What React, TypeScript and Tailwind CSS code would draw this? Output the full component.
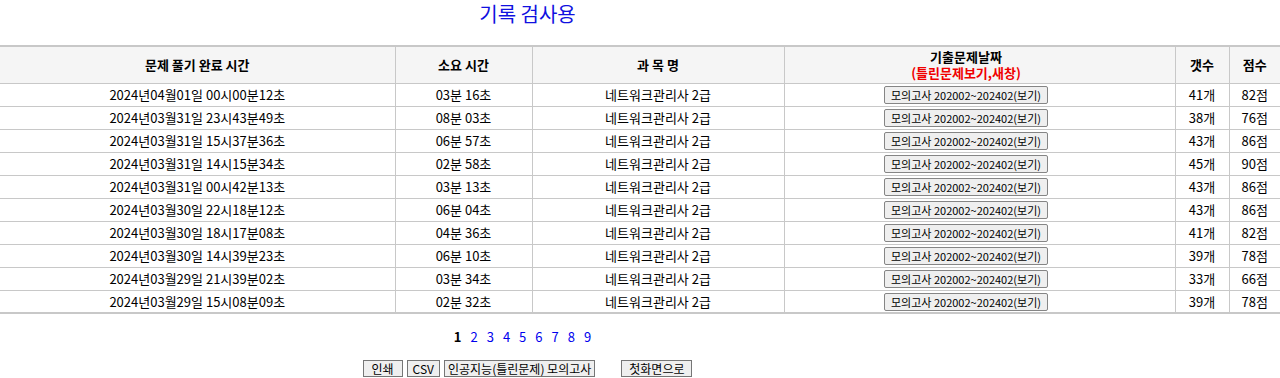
const rows = [
  { done: '2024년04월01일 00시00분12초', took: '03분 16초', cnt: '41개', score: '82점' },
  { done: '2024년03월31일 23시43분49초', took: '08분 03초', cnt: '38개', score: '76점' },
  { done: '2024년03월31일 15시37분36초', took: '06분 57초', cnt: '43개', score: '86점' },
  { done: '2024년03월31일 14시15분34초', took: '02분 58초', cnt: '45개', score: '90점' },
  { done: '2024년03월31일 00시42분13초', took: '03분 13초', cnt: '43개', score: '86점' },
  { done: '2024년03월30일 22시18분12초', took: '06분 04초', cnt: '43개', score: '86점' },
  { done: '2024년03월30일 18시17분08초', took: '04분 36초', cnt: '41개', score: '82점' },
  { done: '2024년03월30일 14시39분23초', took: '06분 10초', cnt: '39개', score: '78점' },
  { done: '2024년03월29일 21시39분02초', took: '03분 34초', cnt: '33개', score: '66점' },
  { done: '2024년03월29일 15시08분09초', took: '02분 32초', cnt: '39개', score: '78점' },
];

const font = { fontFamily: '"Malgun Gothic", "Noto Sans CJK KR", "Noto Sans", sans-serif' };

function Btn({ children }: { children: React.ReactNode }) {
  return (
    <button className="h-[18px] px-[6px] text-[11px] leading-[16px] text-black bg-[#efefef] border border-[#858585] rounded-[2px]">
      {children}
    </button>
  );
}

export default function App() {
  return (
    <div className="w-[1280px] h-[378px] bg-white text-black overflow-hidden" style={font}>
      <div className="w-[1055px] pt-[1px] h-[45px] text-center">
        <h1 className="text-[20px] leading-[26px] text-[#1010e0]">기록 검사용</h1>
      </div>

      <table className="w-full table-fixed border-collapse text-[13px]">
        <colgroup>
          <col className="w-[395px]" />
          <col className="w-[137px]" />
          <col className="w-[252px]" />
          <col className="w-[391px]" />
          <col className="w-[54px]" />
          <col />
        </colgroup>
        <thead>
          <tr className="bg-[#f5f5f5] border-t-2 border-b border-[#c8c8c8] h-[37px]">
            <th className="font-bold border-r border-[#c8c8c8] leading-[16px]">문제 풀기 완료 시간</th>
            <th className="font-bold border-r border-[#c8c8c8] leading-[16px]">소요 시간</th>
            <th className="font-bold border-r border-[#c8c8c8] leading-[16px]">과 목 명</th>
            <th className="font-bold border-r border-[#c8c8c8] leading-[16px] pr-[27px] py-0">
              <div>기출문제날짜</div>
              <div className="text-[#f00000]">(틀린문제보기,새창)</div>
            </th>
            <th className="font-bold border-r border-[#c8c8c8] leading-[16px]">갯수</th>
            <th className="font-bold leading-[16px]">점수</th>
          </tr>
        </thead>
        <tbody>
          {rows.map((r, i) => (
            <tr
              key={i}
              className={`h-[23px] text-center ${i === rows.length - 1 ? 'border-b-2' : 'border-b'} border-[#c8c8c8]`}
            >
              <td className="border-r border-[#c8c8c8] p-0">{r.done}</td>
              <td className="border-r border-[#c8c8c8] p-0">{r.took}</td>
              <td className="border-r border-[#c8c8c8] p-0">네트워크관리사 2급</td>
              <td className="border-r border-[#c8c8c8] p-0 pr-[27px] align-middle">
                <Btn>모의고사 202002~202402(보기)</Btn>
              </td>
              <td className="border-r border-[#c8c8c8] p-0">{r.cnt}</td>
              <td className="p-0">{r.score}</td>
            </tr>
          ))}
        </tbody>
      </table>

      <div className="w-[1045px] mt-[14px] flex justify-center gap-[9px] text-[13px] leading-[17px]">
        <span className="font-bold text-black">1</span>
        {[2, 3, 4, 5, 6, 7, 8, 9].map((n) => (
          <a key={n} className="text-[#0000ee]">{n}</a>
        ))}
      </div>

      <div className="w-[1055px] mt-[15px] flex justify-center items-center text-[12px]">
        <div className="flex gap-[4px]">
          <button className="h-[17px] px-[8px] leading-[15px] bg-[#efefef] border border-[#767676]">인쇄</button>
          <button className="h-[17px] px-[5px] leading-[15px] bg-[#efefef] border border-[#767676]">CSV</button>
          <button className="h-[17px] px-[3px] leading-[15px] bg-[#efefef] border border-[#767676]">인공지능(틀린문제) 모의고사</button>
        </div>
        <button className="ml-[26px] h-[17px] px-[7px] leading-[15px] bg-[#efefef] border border-[#767676]">첫화면으로</button>
      </div>
    </div>
  );
}
